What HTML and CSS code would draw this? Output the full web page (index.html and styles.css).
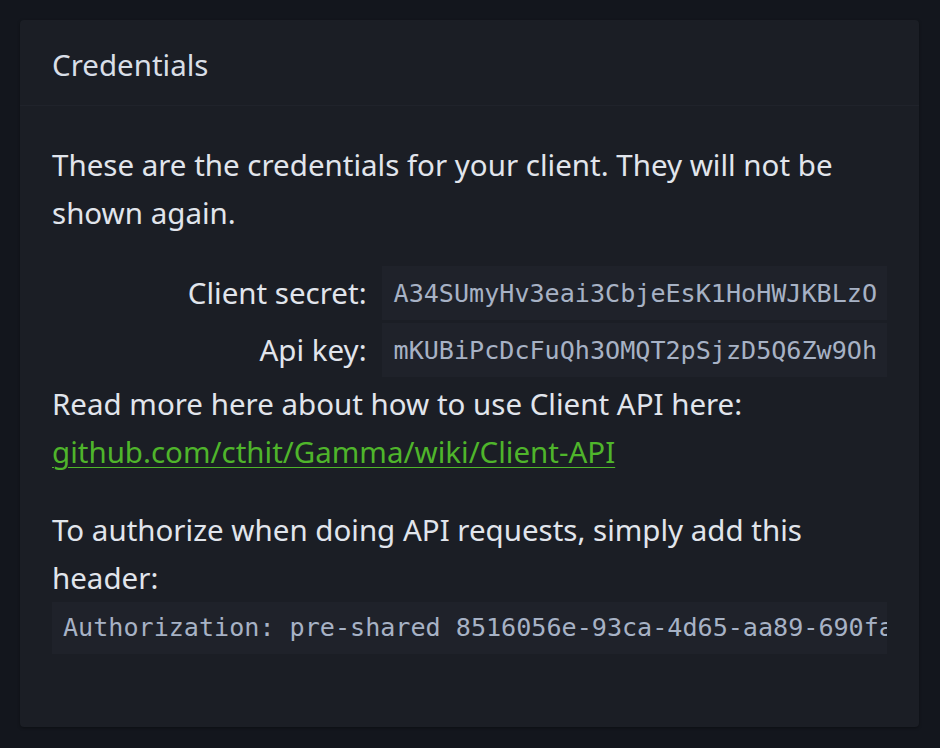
FILE: index.html
```html
<!DOCTYPE html>
<html lang="en">
<head>
<meta charset="utf-8">
<title>Credentials</title>
<link rel="stylesheet" href="styles.css">
</head>
<body>
<main class="page">
  <section class="card">
    <header class="card-header">
      <h2 class="card-title">Credentials</h2>
    </header>
    <div class="card-body">
      <p class="text intro">These are the credentials for your client. They will not be shown again.</p>
      <div class="creds">
        <div class="label">Client secret:</div>
        <div class="value"><code>A34SUmyHv3eai3CbjeEsK1HoHWJKBLzO</code></div>
        <div class="label">Api key:</div>
        <div class="value"><code>mKUBiPcDcFuQh3OMQT2pSjzD5Q6Zw9Oh</code></div>
      </div>
      <p class="text more">Read more here about how to use Client API here:<br><a class="link" href="#">github.com/cthit/Gamma/wiki/Client-API</a></p>
      <p class="text auth">To authorize when doing API requests, simply add this header:</p>
      <pre class="codeblock">Authorization: pre-shared 8516056e-93ca-4d65-aa89-690fa2b1c4e7</pre>
    </div>
  </section>
</main>
</body>
</html>
```
FILE: styles.css
```css
html, body {
  margin: 0;
  padding: 0;
  background: #13161d;
}
body {
  font-family: "Noto Sans", "Open Sans", sans-serif;
  color: #e1e5ec;
}
.page {
  padding: 20px 21px 21px 20px;
}
.card {
  background: #1b1e25;
  border-radius: 4px;
  box-shadow: 0 1px 3px rgba(0,0,0,0.35);
  height: 707px;
  box-sizing: border-box;
}
.card-header {
  height: 86px;
  box-sizing: border-box;
  border-bottom: 1px solid #20232b;
  display: flex;
  align-items: center;
  padding: 3px 32px 0 32px;
}
.card-title {
  margin: 0;
  font-weight: 400;
  font-size: 29.5px;
  color: #d9dee7;
}
.card-body {
  padding: 35px 32px 0 32px;
}
.text {
  margin: 0;
  font-size: 29.5px;
  line-height: 48px;
}
.intro {
  margin-bottom: 29px;
}
.creds {
  display: grid;
  grid-template-columns: 1fr auto;
  column-gap: 15px;
  row-gap: 3px;
}
.label {
  text-align: right;
  font-size: 29.5px;
  line-height: 54px;
}
.value {
  background: #1f222a;
  display: flex;
  align-items: center;
  padding: 0 10px 0 12px;
}
.value code,
.codeblock {
  font-family: "DejaVu Sans Mono", "Liberation Mono", monospace;
  font-size: 25.1px;
  color: #a7b2c5;
}
.more {
  margin-top: 3px;
}
.link {
  color: #4fb52b;
  text-decoration: underline;
  text-decoration-thickness: 1px;
  text-underline-offset: 4px;
}
.auth {
  margin-top: 30px;
}
.codeblock {
  margin: 0;
  background: #1f222a;
  padding: 0 11px;
  height: 52px;
  line-height: 52px;
  overflow: hidden;
  white-space: pre;
}
```
